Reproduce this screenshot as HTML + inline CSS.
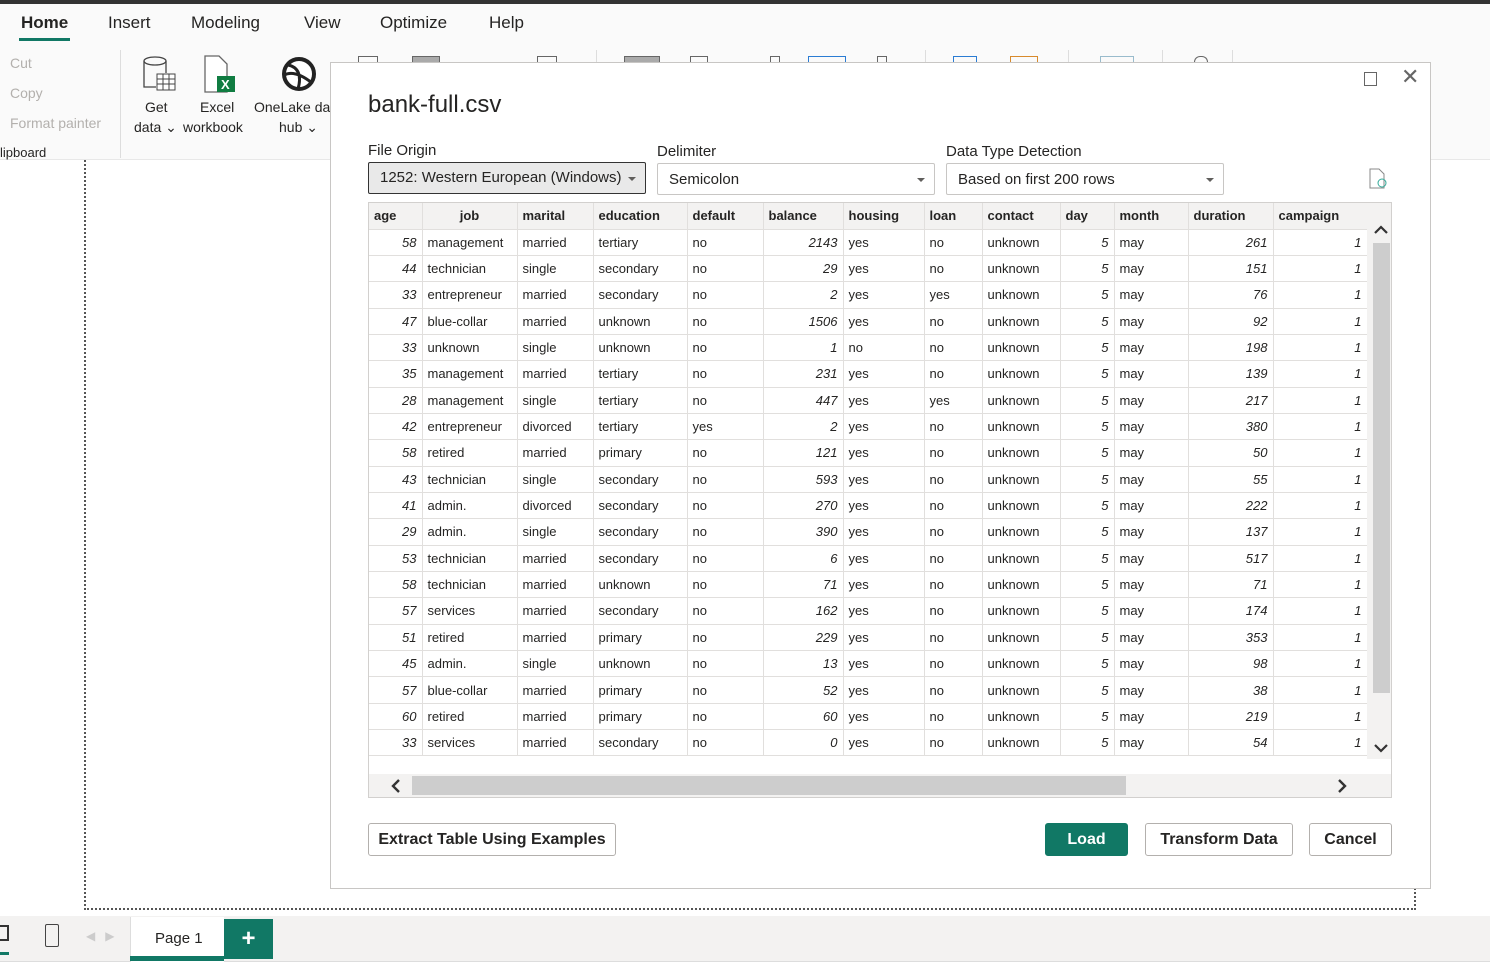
<!DOCTYPE html>
<html><head><meta charset="utf-8"><style>
*{box-sizing:border-box;margin:0;padding:0}
body{width:1490px;height:967px;overflow:hidden;background:#fff;font-family:"Liberation Sans",sans-serif;color:#252423;position:relative}
.a{position:absolute;white-space:nowrap}
.tab{font-size:17px;top:13px;color:#252423}
.gray{color:#b3b0ad;font-size:14px}
.sel{position:absolute;height:32px;border:1px solid #c8c6c4;border-radius:2px;font-size:15px;padding:7px 11px;background:#fff}
.sel:after{content:"";position:absolute;right:9px;top:14px;border:4px solid transparent;border-top:4px solid #605e5c}
table{border-collapse:collapse;font-size:13px;table-layout:fixed}
td,th{border-right:1px solid #e1dfdd;border-bottom:1px solid #e1dfdd;height:26.35px;padding:0 5px;overflow:hidden;white-space:nowrap}
th{text-align:left;font-weight:bold;background:#f3f2f1;height:26px;color:#252423}
td.n{text-align:right;font-style:italic}
.btn{position:absolute;height:33px;border:1px solid #b3b0ad;border-radius:3px;font-size:16px;font-weight:bold;text-align:center;line-height:31px;background:#fff;color:#252423}
.ic{position:absolute;top:56px;height:8px;border:1.5px solid #666;border-bottom:none}
</style></head><body>
<div class="a" style="left:0;top:0;width:1490px;height:4px;background:#333"></div>
<div class="a" style="left:0;top:4px;width:1490px;height:156px;background:#fafafa;border-bottom:1px solid #e8e8e8"></div>
<div class="a tab" style="left:21px;font-weight:bold">Home</div>
<div class="a" style="left:19px;top:38px;width:51px;height:3px;background:#117865"></div>
<div class="a tab" style="left:108px">Insert</div>
<div class="a tab" style="left:191px">Modeling</div>
<div class="a tab" style="left:304px">View</div>
<div class="a tab" style="left:380px">Optimize</div>
<div class="a tab" style="left:489px">Help</div>
<div class="a gray" style="left:10px;top:55px">Cut</div>
<div class="a gray" style="left:10px;top:85px">Copy</div>
<div class="a gray" style="left:10px;top:115px">Format painter</div>
<div class="a" style="left:0;top:145px;font-size:13px">lipboard</div>
<div class="a" style="left:120px;top:50px;width:1px;height:108px;background:#ddd"></div>
<div class="ic" style="left:358px;width:20px"></div>
<div class="ic" style="left:412px;width:28px;background:#aaa"></div>
<div class="ic" style="left:537px;width:20px"></div>
<div class="ic" style="left:624px;width:36px;background:#aaa"></div>
<div class="ic" style="left:690px;width:18px"></div>
<div class="ic" style="left:770px;width:10px"></div>
<div class="ic" style="left:808px;width:38px;border-color:#2b7cd3"></div>
<div class="ic" style="left:877px;width:10px"></div>
<div class="ic" style="left:953px;width:24px;border-color:#2b7cd3"></div>
<div class="ic" style="left:1010px;width:28px;border-color:#d88a2c"></div>
<div class="ic" style="left:1100px;width:34px;border-color:#9bc"></div>
<div class="ic" style="left:1194px;width:14px;border-radius:6px 6px 0 0"></div>
<div class="a" style="left:596px;top:50px;width:1px;height:12px;background:#ddd"></div>
<div class="a" style="left:925px;top:50px;width:1px;height:12px;background:#ddd"></div>
<div class="a" style="left:1068px;top:50px;width:1px;height:12px;background:#ddd"></div>
<div class="a" style="left:1162px;top:50px;width:1px;height:12px;background:#ddd"></div>
<div class="a" style="left:1232px;top:50px;width:1px;height:12px;background:#ddd"></div>
<svg class="a" style="left:140px;top:55px" width="40" height="40"><ellipse cx="15" cy="6" rx="11" ry="4" fill="none" stroke="#444" stroke-width="1.3"/><path d="M4 6v26h12M26 6v12" fill="none" stroke="#444" stroke-width="1.3"/><rect x="17" y="19" width="18" height="16" fill="#fff" stroke="#444"/><path d="M17 24h18M17 29h18M23 19v16M29 19v16" stroke="#444"/></svg>
<svg class="a" style="left:203px;top:55px" width="36" height="40"><path d="M2 1h14l8 8v28H2z" fill="#fff" stroke="#666" stroke-width="1.3"/><rect x="14" y="21" width="18" height="16" fill="#107c41"/><text x="18" y="34" fill="#fff" font-size="13" font-weight="bold" font-family="Liberation Sans">X</text></svg>
<svg class="a" style="left:280px;top:55px" width="40" height="40"><circle cx="19" cy="19" r="15" fill="#fff" stroke="#222" stroke-width="4"/><path d="M8 10c10 2 14 10 10 24M4 20c8-4 18 0 28 8" fill="none" stroke="#222" stroke-width="3"/></svg>
<div class="a" style="left:145px;top:99px;font-size:14px">Get</div>
<div class="a" style="left:134px;top:119px;font-size:14px">data ⌄</div>
<div class="a" style="left:200px;top:99px;font-size:14px">Excel</div>
<div class="a" style="left:183px;top:119px;font-size:14px">workbook</div>
<div class="a" style="left:254px;top:99px;font-size:14px">OneLake da</div>
<div class="a" style="left:279px;top:119px;font-size:14px">hub ⌄</div>
<div class="a" style="left:84px;top:160px;width:1332px;height:750px;border:2px dotted #555;border-top:none"></div>
<div class="a" style="left:0;top:916px;width:1490px;height:46px;background:#f3f2f1;border-bottom:1px solid #ddd"></div>
<div class="a" style="left:0;top:925px;width:9px;height:16px;border:2px solid #333;border-left:none"></div>
<div class="a" style="left:0;top:952px;width:9px;height:3px;background:#117865"></div>
<div class="a" style="left:45px;top:924px;width:14px;height:23px;border:1.5px solid #444;border-radius:2px"></div>
<div class="a" style="left:86px;top:929px;color:#ccc;font-size:12px">◀ &nbsp; ▶</div>
<div class="a" style="left:130px;top:917px;width:94px;height:45px;background:#fff;border-left:1px solid #ddd"></div>
<div class="a" style="left:130px;top:956px;width:94px;height:5px;background:#117865"></div>
<div class="a" style="left:155px;top:930px;font-size:15px">Page 1</div>
<div class="a" style="left:224px;top:919px;width:49px;height:40px;background:#117865;color:#fff;font-size:24px;font-weight:bold;text-align:center;line-height:40px">+</div>

<div class="a" style="left:330px;top:62px;width:1101px;height:827px;background:#fff;border:1px solid #c8c6c4"></div>
<div class="a" style="left:1364px;top:72px;width:13px;height:14px;border:1.5px solid #666"></div>
<div class="a" style="left:1401px;top:64px;font-size:22px;color:#666">✕</div>
<div class="a" style="left:368px;top:91px;font-size:24px">bank-full.csv</div>
<div class="a" style="left:368px;top:142px;font-size:15px">File Origin</div>
<div class="a" style="left:657px;top:143px;font-size:15px">Delimiter</div>
<div class="a" style="left:946px;top:143px;font-size:15px">Data Type Detection</div>
<div class="sel" style="left:368px;top:162px;width:278px;background:#e9e9e9;border:1.5px solid #333;padding-top:6px">1252: Western European (Windows)</div>
<div class="sel" style="left:657px;top:163px;width:278px">Semicolon</div>
<div class="sel" style="left:946px;top:163px;width:278px">Based on first 200 rows</div>
<svg class="a" style="left:1368px;top:168px" width="22" height="22"><path d="M2 1h9l5 5v14H2z" fill="none" stroke="#888"/><circle cx="14" cy="15" r="4" fill="none" stroke="#3a9"/></svg>
<div class="a" style="left:368px;top:202px;width:1024px;height:596px;border:1px solid #d2d0ce;background:#fff;overflow:hidden">
<table style="width:998px">
<colgroup><col style="width:53px"><col style="width:95px"><col style="width:76px"><col style="width:94px"><col style="width:76px"><col style="width:80px"><col style="width:81px"><col style="width:58px"><col style="width:78px"><col style="width:54px"><col style="width:74px"><col style="width:85px"><col style="width:94px"></colgroup>
<tr><th>age</th><th style="text-align:center">job</th><th>marital</th><th>education</th><th>default</th><th>balance</th><th>housing</th><th>loan</th><th>contact</th><th>day</th><th>month</th><th>duration</th><th>campaign</th></tr>
<tbody id="tb"></tbody></table>
<div class="a" style="left:998px;top:0;width:25px;height:556px;background:#f3f2f1"></div>
<div class="a" style="left:1004px;top:40px;width:17px;height:450px;background:#cdcdcd"></div>
<svg class="a" style="left:1003px;top:20px" width="18" height="14"><path d="M3 10l6-6 6 6" fill="none" stroke="#333" stroke-width="2.2"/></svg>
<svg class="a" style="left:1003px;top:538px" width="18" height="14"><path d="M3 4l6 6 6-6" fill="none" stroke="#333" stroke-width="2.2"/></svg>
<div class="a" style="left:0;top:571px;width:1023px;height:24px;background:#f3f2f1"></div>
<div class="a" style="left:43px;top:573px;width:714px;height:19px;background:#cdcdcd"></div>
<svg class="a" style="left:20px;top:575px" width="14" height="16"><path d="M10 2l-6 6 6 6" fill="none" stroke="#333" stroke-width="2.4"/></svg>
<svg class="a" style="left:966px;top:575px" width="14" height="16"><path d="M4 2l6 6-6 6" fill="none" stroke="#333" stroke-width="2.4"/></svg>
</div>
<div class="btn" style="left:368px;top:823px;width:248px">Extract Table Using Examples</div>
<div class="btn" style="left:1045px;top:823px;width:83px;background:#117865;border-color:#117865;color:#fff">Load</div>
<div class="btn" style="left:1145px;top:823px;width:148px">Transform Data</div>
<div class="btn" style="left:1309px;top:823px;width:83px">Cancel</div>
<script>
var d=`58 management married tertiary no 2143 yes no 261
44 technician single secondary no 29 yes no 151
33 entrepreneur married secondary no 2 yes yes 76
47 blue-collar married unknown no 1506 yes no 92
33 unknown single unknown no 1 no no 198
35 management married tertiary no 231 yes no 139
28 management single tertiary no 447 yes yes 217
42 entrepreneur divorced tertiary yes 2 yes no 380
58 retired married primary no 121 yes no 50
43 technician single secondary no 593 yes no 55
41 admin. divorced secondary no 270 yes no 222
29 admin. single secondary no 390 yes no 137
53 technician married secondary no 6 yes no 517
58 technician married unknown no 71 yes no 71
57 services married secondary no 162 yes no 174
51 retired married primary no 229 yes no 353
45 admin. single unknown no 13 yes no 98
57 blue-collar married primary no 52 yes no 38
60 retired married primary no 60 yes no 219
33 services married secondary no 0 yes no 54`.split("\n"),h="";
d.forEach(function(l){var c=l.split(" ");h+="<tr><td class=n>"+c[0]+"</td><td>"+c[1]+"</td><td>"+c[2]+"</td><td>"+c[3]+"</td><td>"+c[4]+"</td><td class=n>"+c[5]+"</td><td>"+c[6]+"</td><td>"+c[7]+"</td><td>unknown</td><td class=n>5</td><td>may</td><td class=n>"+c[8]+"</td><td class=n>1</td></tr>"});
document.getElementById("tb").innerHTML=h;
</script>
</body></html>
